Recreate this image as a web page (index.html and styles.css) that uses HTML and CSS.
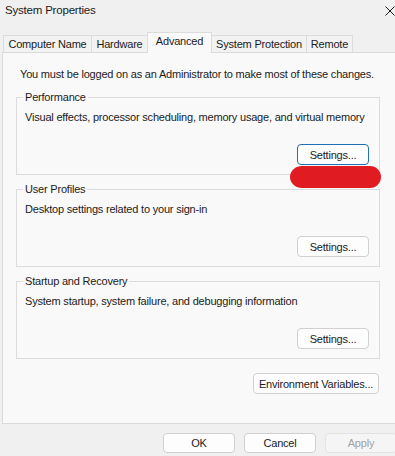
FILE: index.html
```html
<!DOCTYPE html>
<html lang="en">
<head>
    <meta charset="UTF-8">
    <meta name="viewport" content="width=device-width, initial-scale=1.0">
    <title>System Properties</title>
    <link rel="stylesheet" href="styles.css">
</head>
<body>
    <div class="window">
        <div class="titlebar">
            <span class="title">System Properties</span>
            <div class="close">
                <svg width="10" height="10" viewBox="0 0 10 10">
                    <path d="M0.5 0.5 L9.5 9.5 M9.5 0.5 L0.5 9.5" stroke="#1b1b1b" stroke-width="1" fill="none"/>
                </svg>
            </div>
        </div>

        <div class="tabs">
            <div class="tab" id="tab-name">Computer Name</div>
            <div class="tab" id="tab-hardware">Hardware</div>
            <div class="tab active" id="tab-advanced">Advanced</div>
            <div class="tab" id="tab-protection">System Protection</div>
            <div class="tab" id="tab-remote">Remote</div>
        </div>

        <div class="panel">
            <p class="note">You must be logged on as an Administrator to make most of these changes.</p>

            <fieldset class="group">
                <legend>Performance</legend>
                <p class="desc">Visual effects, processor scheduling, memory usage, and virtual memory</p>
                <div class="actions">
                    <button class="btn focused">Settings...</button>
                </div>
            </fieldset>

            <fieldset class="group">
                <legend>User Profiles</legend>
                <p class="desc">Desktop settings related to your sign-in</p>
                <div class="actions">
                    <button class="btn">Settings...</button>
                </div>
            </fieldset>

            <fieldset class="group">
                <legend>Startup and Recovery</legend>
                <p class="desc">System startup, system failure, and debugging information</p>
                <div class="actions">
                    <button class="btn">Settings...</button>
                </div>
            </fieldset>

            <div class="env-row">
                <button class="btn env">Environment Variables...</button>
            </div>

            <!-- redaction mark drawn over the screenshot -->
            <div class="scribble"></div>
        </div>

        <div class="footer">
            <button class="btn">OK</button>
            <button class="btn">Cancel</button>
            <button class="btn" disabled>Apply</button>
        </div>
    </div>
</body>
</html>
```

FILE: styles.css
```css
* {
    padding: 0;
    margin: 0;
    box-sizing: border-box;
}

body {
    background-color: #f0f0f0;
    overflow: hidden;
    font-family: "Liberation Sans", Arial, sans-serif;
    font-size: 11px;
    letter-spacing: -0.2px;
    color: #1b1b1b;
}

.window {
    width: 413px;
    height: 456px;
    display: flex;
    flex-direction: column;
}

.titlebar {
    height: 32px;
    display: flex;
    justify-content: space-between;
    align-items: flex-start;
    padding-top: 3px;
    padding-left: 5px;
}

.title {
    font-size: 11.5px;
    line-height: 15px;
}

.close {
    width: 46px;
    display: flex;
    justify-content: center;
    padding-top: 3px;
}

/* tabs */
.tabs {
    height: 20px;
    display: flex;
    align-items: flex-end;
    padding-left: 3px;
}

.tab {
    height: 17px;
    display: flex;
    justify-content: center;
    align-items: center;
    border: 1px solid #dcdcdc;
    border-bottom: none;
    background-color: #f2f2f2;
    margin-left: -1px;
    line-height: 15px;
}

.tab:first-child {
    margin-left: 0;
}

.tab.active {
    height: 21px;
    margin-bottom: -1px;
    background-color: #f9f9f9;
    position: relative;
    z-index: 1;
    padding-bottom: 3px;
}

#tab-name { width: 89px; }
#tab-hardware { width: 57px; }
#tab-advanced { width: 65px; }
#tab-protection { width: 96px; }
#tab-remote { width: 47px; }

/* tab page */
.panel {
    position: relative;
    height: 372px;
    margin-left: 2px;
    margin-right: 2px;
    border: 1px solid #dadada;
    background-color: #f9f9f9;
    padding-left: 13px;
}

.note {
    margin-top: 14px;
    padding-left: 4px;
    line-height: 15px;
    white-space: nowrap;
}

.group {
    width: 364px;
    margin-top: 7px;
    border: 1px solid #dcdcdc;
    padding: 0 10px 9px 8px;
}

.note + .group {
    margin-top: 8px;
}

.group legend {
    padding: 0 2px;
    margin-left: -2px;
    line-height: 14px;
}

.desc {
    margin-top: 6px;
    line-height: 15px;
    white-space: nowrap;
}

.actions {
    display: flex;
    justify-content: flex-end;
    margin-top: 19px;
}

.btn {
    width: 72px;
    height: 21px;
    font-family: "Liberation Sans", Arial, sans-serif;
    font-size: 11px;
    letter-spacing: -0.2px;
    color: #1b1b1b;
    background-color: #fdfdfd;
    border: 1px solid #d0d0d0;
    border-radius: 4px;
}

.btn.focused {
    border-color: #1f6fb5;
}

.btn:disabled {
    color: #a2a2a2;
    background-color: #f5f5f5;
    border-color: #e3e3e3;
}

.env-row {
    width: 364px;
    display: flex;
    justify-content: flex-end;
    margin-top: 14px;
    padding-right: 1px;
}

.btn.env {
    width: 126px;
}

.scribble {
    position: absolute;
    left: 287px;
    top: 113px;
    width: 91px;
    height: 22px;
    background-color: #e11b22;
    border-radius: 12px 11px 11px 12px / 11px;
}

/* bottom buttons */
.footer {
    display: flex;
    justify-content: flex-end;
    gap: 9px;
    padding-top: 9px;
    padding-right: 16px;
}

.footer .btn {
    height: 20px;
}
```
